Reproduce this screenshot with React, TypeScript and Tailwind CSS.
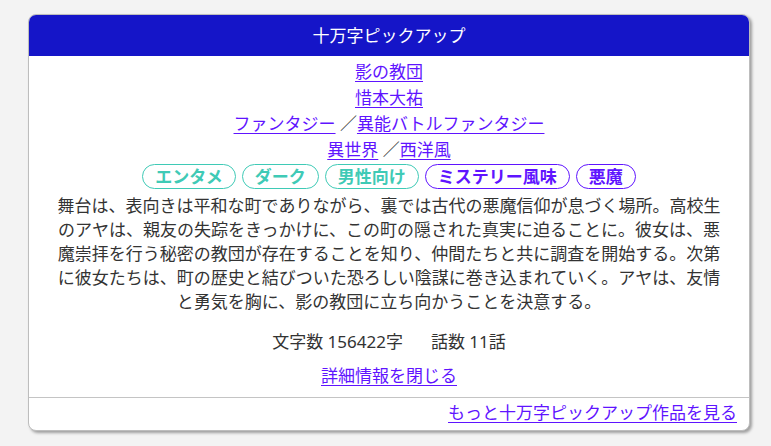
import React from "react";

const link = "text-[#5f14ff] underline decoration-1 underline-offset-[3px]";
const tealPill =
  "inline-flex items-center h-[25px] px-[12px] rounded-full border-[1.5px] border-[#3fcab6] text-[#3fcab6] font-bold leading-none";
const purplePill =
  "inline-flex items-center h-[25px] px-[12px] rounded-full border-[1.5px] border-[#5f14ff] text-[#5f14ff] font-bold leading-none";

export default function App() {
  return (
    <div
      className="w-[771px] h-[446px] bg-[#f3f3f3] pt-[14px] pl-[28px]"
      style={{ fontFamily: '"Noto Sans", "Noto Sans CJK JP", sans-serif' }}
    >
      <div className="w-[722px] bg-white border border-[#bdbdbd] rounded-[8px] shadow-[2px_2px_3px_rgba(0,0,0,0.35)] overflow-hidden text-[17px]">
        <div className="h-[41px] bg-[#1515c8] flex items-center justify-center text-white text-[17px]">
          十万字ピックアップ
        </div>
        <div className="px-[28px] pt-[3px] text-center text-[#333]">
          <div className="leading-[26px]">
            <a className={link}>影の教団</a>
          </div>
          <div className="leading-[26px]">
            <a className={link}>惜本大祐</a>
          </div>
          <div className="leading-[26px]">
            <a className={link}>ファンタジー</a> ／<a className={link}>異能バトルファンタジー</a>
          </div>
          <div className="leading-[26px]">
            <a className={link}>異世界</a> ／<a className={link}>西洋風</a>
          </div>
          <div className="flex justify-center gap-[6px] mt-[1px]">
            <span className={tealPill}>エンタメ</span>
            <span className={tealPill}>ダーク</span>
            <span className={tealPill}>男性向け</span>
            <span className={purplePill}>ミステリー風味</span>
            <span className={purplePill}>悪魔</span>
          </div>
          <p className="mt-[5px] leading-[24px]">
            舞台は、表向きは平和な町でありながら、裏では古代の悪魔信仰が息づく場所。高校生のアヤは、親友の失踪をきっかけに、この町の隠された真実に迫ることに。彼女は、悪魔崇拝を行う秘密の教団が存在することを知り、仲間たちと共に調査を開始する。次第に彼女たちは、町の歴史と結びついた恐ろしい陰謀に巻き込まれていく。アヤは、友情と勇気を胸に、影の教団に立ち向かうことを決意する。
          </p>
          <div className="mt-[16px] leading-[24px]">
            <span>文字数 156422字</span>
            <span className="ml-[28px]">話数 11話</span>
          </div>
          <div className="mt-[10px] leading-[24px]">
            <a className={link}>詳細情報を閉じる</a>
          </div>
        </div>
        <div className="mt-[9px] border-t border-[#c4c4c4] pt-[3px] pb-[5px] pr-[12px] text-right leading-[24px]">
          <a className={link}>もっと十万字ピックアップ作品を見る</a>
        </div>
      </div>
    </div>
  );
}
